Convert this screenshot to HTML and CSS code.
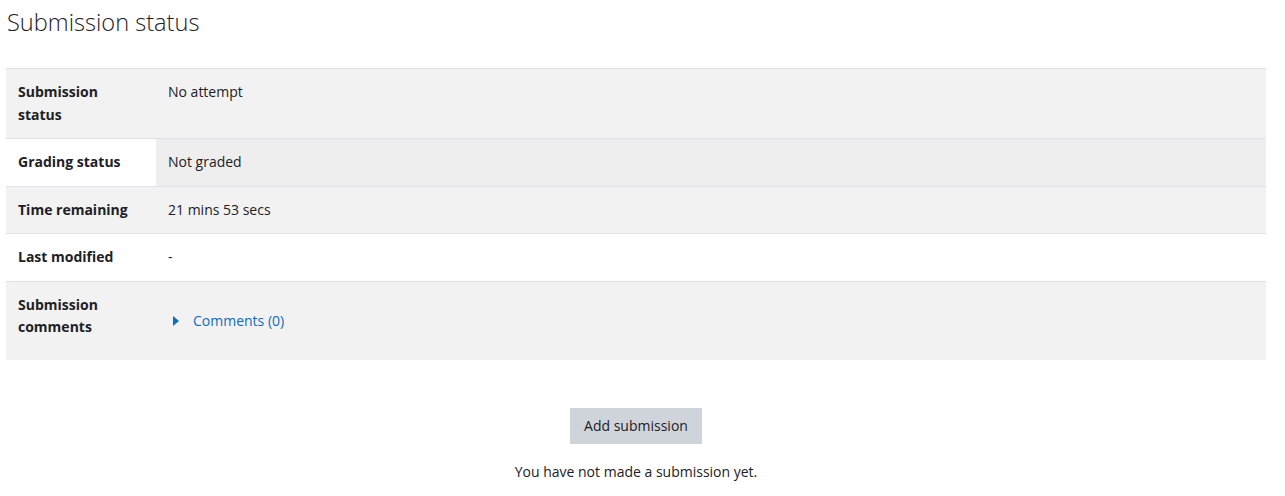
FILE: index.html
```html
<!DOCTYPE html>
<html lang="en">
<head>
<meta charset="utf-8">
<title>Submission status</title>
<link rel="stylesheet" href="styles.css">
</head>
<body>
<div class="page">
  <h2 class="title">Submission status</h2>
  <table class="status-table">
    <tbody>
      <tr class="striped">
        <th>Submission status</th>
        <td>No attempt</td>
      </tr>
      <tr>
        <th>Grading status</th>
        <td class="notgraded">Not graded</td>
      </tr>
      <tr class="striped">
        <th>Time remaining</th>
        <td>21 mins 53 secs</td>
      </tr>
      <tr>
        <th>Last modified</th>
        <td>-</td>
      </tr>
      <tr class="striped last">
        <th>Submission comments</th>
        <td>
          <div class="comments">
            <a class="comments-link" href="#">
              <svg class="caret" width="6" height="10" viewBox="0 0 6 10"><path d="M0 0 L6 5 L0 10 Z" fill="#0f6cbf"/></svg>
              <span>Comments (0)</span>
            </a>
          </div>
        </td>
      </tr>
    </tbody>
  </table>
  <div class="actions">
    <button class="btn" type="button">Add submission</button>
    <p class="note">You have not made a submission yet.</p>
  </div>
</div>
</body>
</html>
```
FILE: styles.css
```css
html, body {
  margin: 0;
  padding: 0;
  background: #fff;
}
body {
  font-family: "Open Sans", "Noto Sans", "Liberation Sans", sans-serif;
  font-size: 14px;
  line-height: 22.5px;
  color: #1d2125;
}
.page {
  padding: 0 19px 0 6px;
}
.title {
  margin: 0;
  padding: 6px 0 0 1px;
  font-size: 23.6px;
  font-weight: 300;
  line-height: 32px;
  height: 68px;
  box-sizing: border-box;
  color: #1d2125;
}
.status-table {
  width: 100%;
  border-collapse: collapse;
}
.status-table tr {
  border-top: 1px solid #dee2e6;
}
.status-table tr.last {
  border-bottom: none;
}
.status-table th,
.status-table td {
  padding: 12px;
  text-align: left;
  vertical-align: top;
}
.status-table th {
  width: 126px;
  font-weight: 700;
}
.status-table tr.striped {
  background: #f2f2f2;
}
.status-table td.notgraded {
  background: #eeeeee;
}
.comments {
  padding: 16px 0;
}
.comments-link {
  display: inline-flex;
  align-items: center;
  gap: 14px;
  padding-left: 5px;
  color: #0f6cbf;
  text-decoration: none;
}
.caret {
  display: block;
}
.actions {
  display: flex;
  flex-direction: column;
  align-items: center;
  padding-top: 48px;
  padding-right: 0;
}
.btn {
  font-family: inherit;
  font-size: 14px;
  line-height: 22.5px;
  color: #1d2125;
  background: #ced4da;
  border: 1px solid #ced4da;
  border-radius: 0;
  padding: 6px 12px;
  width: 132px;
  height: 36px;
}
.note {
  margin: 17px 0 0;
}
```
